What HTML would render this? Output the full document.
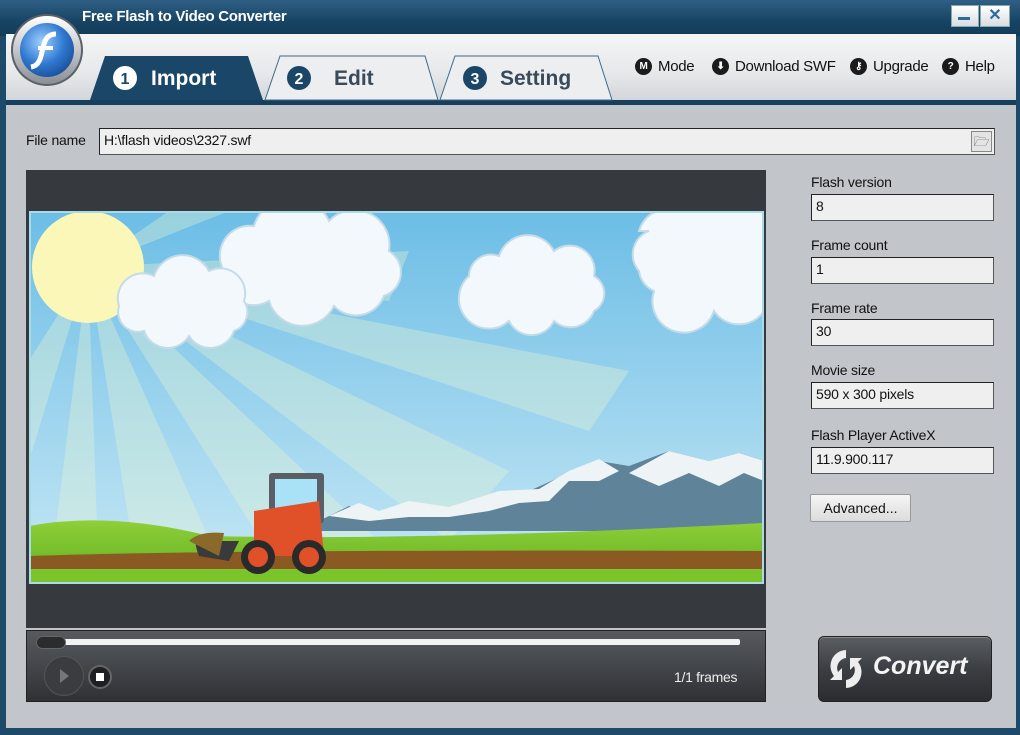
<!DOCTYPE html>
<html><head><meta charset="utf-8"><style>
*{margin:0;padding:0;box-sizing:border-box}
body{width:1020px;height:735px;overflow:hidden;background:#1d4a68;font-family:"Liberation Sans",sans-serif;position:relative}
.abs{position:absolute}
#title{left:0;top:0;width:1020px;height:36px;background:linear-gradient(#2f5f85,#174464 60%,#123b58)}
#tabs{left:6px;top:34px;width:1010px;height:66px;background:linear-gradient(#f4f5f6,#e6e8ea 60%,#d3d6d9)}
#sep{left:6px;top:100px;width:1010px;height:5px;background:#163f5d}
#body{left:6px;top:105px;width:1010px;height:623px;background:#c2c6ca}
.lbl{font-size:14px;color:#111;letter-spacing:-0.2px}
.fld{background:#efefef;border:1px solid #222;border-right-color:#555;border-bottom-color:#555;font-size:14px;padding:3px 4px;color:#111;height:27px;letter-spacing:-0.2px}
.nav{font-size:15px;color:#111;top:57px;height:19px;display:flex;align-items:center;letter-spacing:-0.3px}
.ic{display:inline-block;width:17px;height:17px;border-radius:50%;background:#1b1b1b;color:#fff;font-size:10px;font-weight:bold;text-align:center;line-height:17px;margin-right:6px;flex:none}
</style></head><body>
<div id="title" class="abs"></div>
<div class="abs" style="left:82px;top:8px;color:#fff;font-weight:bold;font-size:15px;letter-spacing:-0.3px">Free Flash to Video Converter</div>
<div class="abs" style="left:951px;top:5px;width:28px;height:22px;background:linear-gradient(#fff,#d8dde2);border:1px solid #8aa"></div>
<div class="abs" style="left:958px;top:17px;width:12px;height:3px;background:#2a6d9a"></div>
<div class="abs" style="left:980px;top:5px;width:30px;height:22px;background:linear-gradient(#fff,#d8dde2);border:1px solid #8aa;color:#2a6d9a;font-weight:bold;font-size:16px;text-align:center;line-height:20px">✕</div>
<div id="tabs" class="abs"></div>
<div id="sep" class="abs"></div>
<div id="body" class="abs"></div>
<svg class="abs" style="left:0;top:0" width="620" height="105">
<defs><radialGradient id="lg" cx="40%" cy="35%" r="70%"><stop offset="0" stop-color="#9fd0ff"/><stop offset="0.6" stop-color="#2f78d0"/><stop offset="1" stop-color="#1a4f9a"/></radialGradient>
<linearGradient id="ring" x1="0" y1="0" x2="0" y2="1"><stop offset="0" stop-color="#fff"/><stop offset="1" stop-color="#8a8f95"/></linearGradient></defs>
<circle cx="47" cy="50" r="36" fill="#5a6168"/>
<circle cx="47" cy="50" r="34" fill="url(#ring)"/>
<circle cx="47" cy="50" r="27" fill="url(#lg)"/>
<path d="M56 34 C46 34 44 42 42 52 C40 62 37 66 31 67" stroke="#fff" stroke-width="5" fill="none"/>
<path d="M38 48 H53" stroke="#fff" stroke-width="4"/>
<path d="M90 100 L105 56 H248 L263 100Z" fill="#1a4768"/>
<path d="M265 100 L280 56 H425 L438 100Z" fill="#eceef0" stroke="#3d6a8a" stroke-width="1"/>
<path d="M440 100 L455 56 H598 L612 100Z" fill="#eceef0" stroke="#3d6a8a" stroke-width="1"/>
<circle cx="125" cy="78" r="12" fill="#fff"/><text x="125" y="84" text-anchor="middle" font-size="16" font-weight="bold" fill="#1a4768" font-family="Liberation Sans">1</text>
<text x="151" y="85" font-size="21" font-weight="bold" fill="#fff" font-family="Liberation Sans">Import</text>
<circle cx="299" cy="78" r="12" fill="#1a4768"/><text x="299" y="84" text-anchor="middle" font-size="16" font-weight="bold" fill="#fff" font-family="Liberation Sans">2</text>
<text x="334" y="85" font-size="21" font-weight="bold" fill="#3a4a58" font-family="Liberation Sans">Edit</text>
<circle cx="475" cy="78" r="12" fill="#1a4768"/><text x="475" y="84" text-anchor="middle" font-size="16" font-weight="bold" fill="#fff" font-family="Liberation Sans">3</text>
<text x="500" y="85" font-size="21" font-weight="bold" fill="#3a4a58" font-family="Liberation Sans">Setting</text>
</svg>
<div class="abs nav" style="left:635px"><span class="ic">M</span>Mode</div>
<div class="abs nav" style="left:712px"><span class="ic">⬇</span>Download SWF</div>
<div class="abs nav" style="left:850px"><span class="ic">⚷</span>Upgrade</div>
<div class="abs nav" style="left:942px"><span class="ic">?</span>Help</div>

<div class="abs lbl" style="left:26px;top:132px">File name</div>
<div class="abs fld" style="left:99px;top:128px;width:896px">H:\flash videos\2327.swf</div>
<div class="abs" style="left:971px;top:131px;width:21px;height:21px;border:1px solid #888;background:#e4e4e4;font-size:13px;text-align:center;line-height:19px;color:#555">🗁</div>

<div class="abs" style="left:26px;top:170px;width:740px;height:458px;background:#36393e"></div>
<svg class="abs" style="left:29px;top:211px" width="735" height="373" viewBox="0 0 735 373">
<defs><linearGradient id="sky" x1="0" y1="0" x2="0" y2="1"><stop offset="0" stop-color="#6cbde6"/><stop offset="1" stop-color="#c7e8f5"/></linearGradient>
<linearGradient id="gr" x1="0" y1="0" x2="0" y2="1"><stop offset="0" stop-color="#8fcf3a"/><stop offset="1" stop-color="#5eae1e"/></linearGradient></defs>
<rect width="735" height="373" fill="url(#sky)"/>
<g fill="#eaf6d2" opacity="0.35">
<path d="M59 56 L0 150 L0 250Z"/><path d="M59 56 L20 373 L70 373Z"/><path d="M59 56 L110 373 L200 373Z"/><path d="M59 56 L260 373 L360 340Z"/><path d="M59 56 L420 330 L480 260Z"/><path d="M59 56 L560 220 L600 160Z"/><path d="M59 56 L360 90 L380 40Z"/><path d="M59 56 L200 0 L140 0Z"/>
</g>
<circle cx="59" cy="56" r="56" fill="#fbf7b8"/>
<g fill="#f2f8fc" stroke="#c4dbe8" stroke-width="2">
<path d="M195 60 a30 30 0 0 1 30-45 a40 40 0 0 1 75-5 a35 35 0 0 1 60 30 a25 25 0 0 1-5 45 a30 30 0 0 1-50 10 a35 35 0 0 1-65-5 a30 30 0 0 1-45-30Z"/>
<path d="M90 95 a25 25 0 0 1 35-30 a30 30 0 0 1 55-5 a25 25 0 0 1 35 30 a20 20 0 0 1-10 30 a25 25 0 0 1-45 5 a25 25 0 0 1-45-5 a20 20 0 0 1-25-25Z"/>
<path d="M440 65 a22 22 0 0 1 30-20 a30 30 0 0 1 55-5 a25 25 0 0 1 40 25 a20 20 0 0 1 0 35 a25 25 0 0 1-40 10 a25 25 0 0 1-45 0 a22 22 0 0 1-40-45Z"/>
<path d="M610 20 a30 30 0 0 1 40-20 L735 0 V100 a30 30 0 0 1-50 0 a30 30 0 0 1-60-20 a25 25 0 0 1-15-20 a25 25 0 0 1 10-40Z"/>
</g>
<path d="M290 310 L320 295 L350 305 L390 295 L420 300 L460 285 L500 280 L540 262 L570 250 L600 255 L640 240 L680 250 L710 242 L735 250 V320 H290Z" fill="#5f8399"/>
<path d="M300 305 L330 292 L350 300 L380 290 L420 296 L470 280 L510 278 L540 260 L570 248 L590 260 L570 270 L540 270 L520 290 L490 292 L460 300 L420 306 L380 306 L340 310Z" fill="#eef3f6"/>
<path d="M600 262 L640 240 L680 250 L710 242 L735 250 V270 L715 262 L690 275 L660 262 L630 275Z" fill="#eef3f6"/>
<path d="M0 315 Q80 300 180 325 Q400 330 735 312 V373 H0Z" fill="url(#gr)"/>
<path d="M0 345 Q200 338 735 340 V365 H0Z" fill="#8a5a22"/>
<path d="M0 358 H735 V373 H0Z" fill="#7cc42c"/>
<rect x="240" y="262" width="55" height="50" fill="#5a5f66" rx="3"/>
<rect x="246" y="268" width="42" height="40" fill="#a9e2f7"/>
<path d="M225 300 L290 290 L295 345 L225 345Z" fill="#e0512a"/>
<path d="M180 330 Q160 320 170 345 L200 350 L210 330Z" fill="#3a3a3a"/>
<path d="M160 330 Q170 320 195 322 L190 345 Z" fill="#8a6a2a"/>
<circle cx="229" cy="346" r="17" fill="#2a2a2a"/><circle cx="229" cy="346" r="10" fill="#e0512a"/>
<circle cx="280" cy="346" r="17" fill="#2a2a2a"/><circle cx="280" cy="346" r="10" fill="#e0512a"/>
</svg>
<div class="abs" style="left:29px;top:211px;width:735px;height:373px;border:2px solid #a7dbe8"></div>

<div class="abs" style="left:26px;top:630px;width:740px;height:72px;background:linear-gradient(#56595e,#45484c 45%,#2f3135);border:1px solid #222"></div>
<div class="abs" style="left:60px;top:639px;width:680px;height:6px;background:#f2f2f2;border-radius:2px"></div>
<div class="abs" style="left:36px;top:636px;width:30px;height:13px;border-radius:7px;background:#2a2c30;border:1px solid #666"></div>
<div class="abs" style="left:44px;top:656px;width:40px;height:40px;border-radius:50%;background:#3a3c40;border:1px solid #555"></div>
<div class="abs" style="left:60px;top:669px;width:0;height:0;border-left:9px solid #777;border-top:7px solid transparent;border-bottom:7px solid transparent"></div>
<div class="abs" style="left:88px;top:665px;width:24px;height:24px;border-radius:50%;background:#1f2023;border:2px solid #666"></div>
<div class="abs" style="left:96px;top:673px;width:8px;height:8px;background:#fff"></div>
<div class="abs" style="left:674px;top:669px;color:#eee;font-size:14px;letter-spacing:-0.3px">1/1 frames</div>

<div class="abs lbl" style="left:811px;top:174px">Flash version</div>
<div class="abs fld" style="left:811px;top:194px;width:183px">8</div>
<div class="abs lbl" style="left:811px;top:237px">Frame count</div>
<div class="abs fld" style="left:811px;top:257px;width:183px">1</div>
<div class="abs lbl" style="left:811px;top:300px">Frame rate</div>
<div class="abs fld" style="left:811px;top:319px;width:183px">30</div>
<div class="abs lbl" style="left:811px;top:362px">Movie size</div>
<div class="abs fld" style="left:811px;top:382px;width:183px">590 x 300 pixels</div>
<div class="abs lbl" style="left:811px;top:427px">Flash Player ActiveX</div>
<div class="abs fld" style="left:811px;top:447px;width:183px">11.9.900.117</div>
<div class="abs" style="left:810px;top:494px;width:101px;height:28px;background:linear-gradient(#f6f6f6,#dcdcdc);border:1px solid #999;border-radius:2px;font-size:14px;text-align:center;line-height:26px;color:#111">Advanced...</div>

<div class="abs" style="left:818px;top:636px;width:174px;height:66px;border-radius:6px;background:linear-gradient(#5b5e63,#3b3e42 50%,#2a2c30);border:1px solid #222;box-shadow:inset 0 1px 0 #888"></div>
<svg class="abs" style="left:828px;top:646px" width="36" height="46"><path d="M18 4 A16 16 0 0 0 6 30 L2 34 H14 V22 L10 26 A10 10 0 0 1 18 12Z M18 42 A16 16 0 0 0 30 16 L34 12 H22 V24 L26 20 A10 10 0 0 1 18 34Z" fill="#eee"/></svg>
<div class="abs" style="left:873px;top:652px;color:#f4f4f4;font-size:25px;font-weight:bold;font-style:italic">Convert</div>
</body></html>
